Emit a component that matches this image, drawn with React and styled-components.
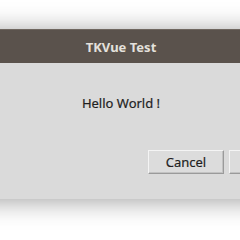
import React from "react";
import styled, { createGlobalStyle } from "styled-components";

const GlobalStyle = createGlobalStyle`
    html, body {
        margin: 0;
        padding: 0;
        background: #ffffff;
        overflow: hidden;
    }
    body {
        font-family: "Noto Sans", "DejaVu Sans", sans-serif;
    }
`;

const Screen = styled.div`
    width: 240px;
    height: 240px;
    padding-top: 29px;
    box-sizing: border-box;
    overflow: hidden;
`;

const Dialog = styled.div`
    width: 400px;
    height: 170px;
    margin-left: -79px;
    display: flex;
    flex-direction: column;
    background-color: #dadada;
    box-shadow: 0 2px 24px rgba(0, 0, 0, 0.38);
`;

const TitleBar = styled.div`
    height: 34px;
    box-sizing: border-box;
    display: flex;
    align-items: center;
    justify-content: center;
    background-color: #5a524c;
    border-top: 1px solid #6f6760;
    color: #e4e1dc;
    font-size: 13px;
    font-weight: 700;
`;

const Message = styled.div`
    height: 60px;
    padding-top: 19px;
    box-sizing: border-box;
    display: flex;
    align-items: center;
    justify-content: center;
    color: #1f1f1f;
    font-size: 13px;
    -webkit-text-stroke: 0.2px #1f1f1f;
`;

const ButtonRow = styled.div`
    display: flex;
    justify-content: flex-end;
    gap: 5px;
    padding: 27px 16px 0 0;
`;

const Button = styled.button`
    width: 76px;
    height: 24px;
    box-sizing: border-box;
    padding: 0;
    background-color: #dcdcdc;
    border: 1px solid;
    border-color: #f4f4f4 #9a9a9a #9a9a9a #f4f4f4;
    box-shadow: inset -1px -1px 0 #c2c2c2;
    color: #1f1f1f;
    font-family: "Noto Sans", "DejaVu Sans", sans-serif;
    font-size: 13px;
    -webkit-text-stroke: 0.2px #1f1f1f;
`;

const App = () => {
    return (
        <>
            <GlobalStyle />
            <Screen>
                <Dialog>
                    <TitleBar>TKVue Test</TitleBar>
                    <Message>Hello World !</Message>
                    <ButtonRow>
                        <Button>Cancel</Button>
                        <Button>OK</Button>
                    </ButtonRow>
                </Dialog>
            </Screen>
        </>
    );
};

export default App;
